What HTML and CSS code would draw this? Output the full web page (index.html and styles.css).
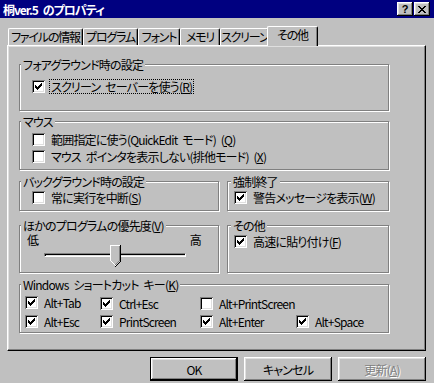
FILE: index.html
```html
<!DOCTYPE html>
<html lang="ja">
<head>
    <meta charset="UTF-8">
    <title>桐ver.5 のプロパティ</title>
    <link rel="stylesheet" href="styles.css">
</head>
<body>
    <div class="window">
        <div class="titlebar">
            <span class="title">桐ver.5 のプロパティ</span>
            <div class="title-buttons">
                <span class="tbtn help">?</span>
                <span class="tbtn">
                    <svg width="8" height="7" viewBox="0 0 8 7" shape-rendering="crispEdges"><path d="M0 0h2v1h-2z M6 0h2v1h-2z M1 1h2v1h-2z M5 1h2v1h-2z M2 2h4v1h-4z M3 3h2v1h-2z M2 4h4v1h-4z M1 5h2v1h-2z M5 5h2v1h-2z M0 6h2v1h-2z M6 6h2v1h-2z"/></svg>
                </span>
            </div>
        </div>

        <div class="content">
            <div class="tabs">
                <div class="tab">ファイルの情報</div>
                <div class="tab">プログラム</div>
                <div class="tab">フォント</div>
                <div class="tab">メモリ</div>
                <div class="tab">スクリーン</div>
                <div class="tab active">その他</div>
            </div>

            <div class="panel">
                <div class="group fore">
                    <div class="group-title">フォアグラウンド時の設定</div>
                    <div class="check first">
                        <span class="cb checked"><svg width="7" height="7" viewBox="0 0 7 7" shape-rendering="crispEdges"><path d="M6 0h1v1h-1z M5 1h2v1h-2z M0 2h1v1h-1z M4 2h3v1h-3z M0 3h2v1h-2z M3 3h3v1h-3z M0 4h5v1h-5z M1 5h3v1h-3z M2 6h1v1h-1z"/></svg></span>
                        <span class="label focused">スクリーン セーバーを使う(<u>R</u>)</span>
                    </div>
                </div>

                <div class="group mouse">
                    <div class="group-title">マウス</div>
                    <div class="check first">
                        <span class="cb"></span>
                        <span class="label">範囲指定に使う(QuickEdit モード) (<u>Q</u>)</span>
                    </div>
                    <div class="check">
                        <span class="cb"></span>
                        <span class="label">マウス ポインタを表示しない(排他モード) (<u>X</u>)</span>
                    </div>
                </div>

                <div class="group-row">
                    <div class="group back">
                        <div class="group-title">バックグラウンド時の設定</div>
                        <div class="check first">
                            <span class="cb"></span>
                            <span class="label">常に実行を中断(<u>S</u>)</span>
                        </div>
                    </div>
                    <div class="group side">
                        <div class="group-title">強制終了</div>
                        <div class="check first">
                            <span class="cb checked"><svg width="7" height="7" viewBox="0 0 7 7" shape-rendering="crispEdges"><path d="M6 0h1v1h-1z M5 1h2v1h-2z M0 2h1v1h-1z M4 2h3v1h-3z M0 3h2v1h-2z M3 3h3v1h-3z M0 4h5v1h-5z M1 5h3v1h-3z M2 6h1v1h-1z"/></svg></span>
                            <span class="label">警告メッセージを表示(<u>W</u>)</span>
                        </div>
                    </div>
                </div>

                <div class="group-row tall">
                    <div class="group prio">
                        <div class="group-title">ほかのプログラムの優先度(<u>V</u>)</div>
                        <div class="slider-labels">
                            <span>低</span>
                            <span>高</span>
                        </div>
                        <div class="slider">
                            <div class="track"></div>
                            <svg class="thumb" style="left: 66px" width="11" height="22" viewBox="0 0 11 22" shape-rendering="crispEdges">
                                <path d="M0 0h11v16l-5 5l-5 -5z" fill="#c0c0c0"/>
                                <path d="M0 0h10v1h-9v15h-1z" fill="#fff"/>
                                <path d="M1 16h1v1h-1z M2 17h1v1h-1z M3 18h1v1h-1z M4 19h1v1h-1z M5 20h1v1h-1z" fill="#fff"/>
                                <path d="M10 0h1v16h-1z" fill="#000"/>
                                <path d="M9 1h1v15h-1z M8 16h1v1h-1z M7 17h1v1h-1z M6 18h1v1h-1z M5 19h1v1h-1z" fill="#808080"/>
                                <path d="M10 16h1v1h-1z M9 17h1v1h-1z M8 18h1v1h-1z M7 19h1v1h-1z M6 20h1v1h-1z M5 21h1v1h-1z" fill="#000"/>
                            </svg>
                        </div>
                    </div>
                    <div class="group side">
                        <div class="group-title">その他</div>
                        <div class="check first">
                            <span class="cb checked"><svg width="7" height="7" viewBox="0 0 7 7" shape-rendering="crispEdges"><path d="M6 0h1v1h-1z M5 1h2v1h-2z M0 2h1v1h-1z M4 2h3v1h-3z M0 3h2v1h-2z M3 3h3v1h-3z M0 4h5v1h-5z M1 5h3v1h-3z M2 6h1v1h-1z"/></svg></span>
                            <span class="label">高速に貼り付け(<u>F</u>)</span>
                        </div>
                    </div>
                </div>

                <div class="group keys">
                    <div class="group-title">Windows ショートカット キー(<u>K</u>)</div>
                    <div class="key-grid">
                        <div class="check"><span class="cb checked"><svg width="7" height="7" viewBox="0 0 7 7" shape-rendering="crispEdges"><path d="M6 0h1v1h-1z M5 1h2v1h-2z M0 2h1v1h-1z M4 2h3v1h-3z M0 3h2v1h-2z M3 3h3v1h-3z M0 4h5v1h-5z M1 5h3v1h-3z M2 6h1v1h-1z"/></svg></span><span class="label">Alt+Tab</span></div>
                        <div class="check"><span class="cb checked"><svg width="7" height="7" viewBox="0 0 7 7" shape-rendering="crispEdges"><path d="M6 0h1v1h-1z M5 1h2v1h-2z M0 2h1v1h-1z M4 2h3v1h-3z M0 3h2v1h-2z M3 3h3v1h-3z M0 4h5v1h-5z M1 5h3v1h-3z M2 6h1v1h-1z"/></svg></span><span class="label">Ctrl+Esc</span></div>
                        <div class="check"><span class="cb"></span><span class="label">Alt+PrintScreen</span></div>
                        <div class="check"></div>
                        <div class="check"><span class="cb checked"><svg width="7" height="7" viewBox="0 0 7 7" shape-rendering="crispEdges"><path d="M6 0h1v1h-1z M5 1h2v1h-2z M0 2h1v1h-1z M4 2h3v1h-3z M0 3h2v1h-2z M3 3h3v1h-3z M0 4h5v1h-5z M1 5h3v1h-3z M2 6h1v1h-1z"/></svg></span><span class="label">Alt+Esc</span></div>
                        <div class="check"><span class="cb checked"><svg width="7" height="7" viewBox="0 0 7 7" shape-rendering="crispEdges"><path d="M6 0h1v1h-1z M5 1h2v1h-2z M0 2h1v1h-1z M4 2h3v1h-3z M0 3h2v1h-2z M3 3h3v1h-3z M0 4h5v1h-5z M1 5h3v1h-3z M2 6h1v1h-1z"/></svg></span><span class="label">PrintScreen</span></div>
                        <div class="check"><span class="cb checked"><svg width="7" height="7" viewBox="0 0 7 7" shape-rendering="crispEdges"><path d="M6 0h1v1h-1z M5 1h2v1h-2z M0 2h1v1h-1z M4 2h3v1h-3z M0 3h2v1h-2z M3 3h3v1h-3z M0 4h5v1h-5z M1 5h3v1h-3z M2 6h1v1h-1z"/></svg></span><span class="label">Alt+Enter</span></div>
                        <div class="check"><span class="cb checked"><svg width="7" height="7" viewBox="0 0 7 7" shape-rendering="crispEdges"><path d="M6 0h1v1h-1z M5 1h2v1h-2z M0 2h1v1h-1z M4 2h3v1h-3z M0 3h2v1h-2z M3 3h3v1h-3z M0 4h5v1h-5z M1 5h3v1h-3z M2 6h1v1h-1z"/></svg></span><span class="label">Alt+Space</span></div>
                    </div>
                </div>
            </div>

            <div class="buttons">
                <div class="btn default">OK</div>
                <div class="btn">キャンセル</div>
                <div class="btn disabled">更新(<u>A</u>)</div>
            </div>
        </div>
    </div>
</body>
</html>
```

FILE: styles.css
```css
* {
    box-sizing: border-box;
}
body {
    margin: 0;
    background: #c0c0c0;
    font-family: "Noto Sans CJK JP", sans-serif;
    font-size: 12px;
    line-height: 13px;
    letter-spacing: -0.8px;
    word-spacing: 3px;
    font-feature-settings: "palt";
    color: #000;
}
.window {
    width: 434px;
    height: 383px;
    overflow: hidden;
}
.titlebar {
    height: 18px;
    background: #000080;
    display: flex;
    align-items: center;
    justify-content: space-between;
    padding: 0 4px 0 3px;
}
.title {
    color: #fff;
    font-weight: bold;
    letter-spacing: -1px;
}
.title-buttons {
    display: flex;
    gap: 1px;
}
.tbtn {
    width: 16px;
    height: 14px;
    display: flex;
    align-items: center;
    justify-content: center;
    background: #c0c0c0;
    box-shadow: inset -1px -1px #000, inset 1px 1px #fff, inset -2px -2px #808080, inset 2px 2px #dfdfdf;
}
.help {
    font-family: "Liberation Sans", sans-serif;
    font-weight: bold;
    font-size: 11px;
    line-height: 11px;
    letter-spacing: 0;
}
.content {
    padding: 8px 8px 0 7px;
}
.tabs {
    display: flex;
    align-items: flex-end;
    height: 19px;
    padding-left: 1px;
}
.tab {
    flex: none;
    height: 17px;
    border-top: 1px solid #fff;
    border-left: 1px solid #fff;
    border-right: 1px solid #000;
    border-radius: 2px 2px 0 0;
    box-shadow: inset -1px 0 #808080;
    line-height: 15px;
    text-align: center;
    letter-spacing: -1.2px;
    white-space: nowrap;
}
.tab:nth-child(1) { width: 75px; }
.tab:nth-child(2) { width: 55px; }
.tab:nth-child(3) { width: 42px; }
.tab:nth-child(4) { width: 40px; }
.tab:nth-child(5) { width: 49px; }
.tab.active {
    width: 51px;
    height: 20px;
    margin: 0 0 -1px -2px;
    position: relative;
    z-index: 1;
    background: #c0c0c0;
    line-height: 16px;
}
.panel {
    height: 306px;
    border-top: 1px solid #fff;
    border-left: 1px solid #fff;
    border-right: 1px solid #000;
    border-bottom: 1px solid #000;
    box-shadow: inset -1px -1px #808080, inset 1px 1px #dfdfdf;
    padding: 18px 0 0 11px;
}
.group {
    width: 370px;
    border: 1px solid #808080;
    box-shadow: 1px 1px #fff, inset 1px 1px #fff;
    padding-left: 12px;
}
.group-title {
    width: max-content;
    margin: -7px 0 0 -11px;
    padding: 0 2px;
    background: #c0c0c0;
    white-space: nowrap;
}
.check {
    display: flex;
    align-items: center;
    gap: 5px;
    height: 16px;
    white-space: nowrap;
}
.check + .check {
    margin-top: 1px;
}
.cb {
    flex: none;
    width: 13px;
    height: 13px;
    padding: 3px;
    background: #fff;
    box-shadow: inset 1px 1px #808080, inset -1px -1px #fff, inset 2px 2px #000, inset -2px -2px #dfdfdf;
}
.cb svg {
    display: block;
}
.label {
    padding: 0 1px;
}
.focused {
    outline: 1px dotted #000;
    outline-offset: 0;
}
.fore {
    height: 47px;
}
.fore .first {
    margin-top: 7px;
}
.mouse {
    height: 49px;
    margin-top: 10px;
}
.mouse .first {
    margin-top: 3px;
}
.group-row {
    display: flex;
    gap: 8px;
    width: 370px;
    margin-top: 11px;
}
.group-row .group {
    height: 30px;
}
.group-row .first {
    margin-top: 1px;
}
.group-row .back,
.group-row .prio {
    width: 200px;
}
.group-row .side {
    width: 162px;
    padding-left: 6px;
}
.group-row .side .group-title {
    margin-left: -3px;
}
.group-row.tall {
    margin-top: 14px;
}
.group-row.tall .group {
    height: 48px;
}
.prio {
    padding-left: 7px;
}
.prio .group-title {
    margin-left: -6px;
}
.slider-labels {
    display: flex;
    justify-content: space-between;
    width: 174px;
    margin-top: 1px;
}
.slider {
    position: relative;
    height: 22px;
    margin-left: 17px;
    padding-top: 7px;
}
.track {
    width: 142px;
    height: 4px;
    border-top: 1px solid #808080;
    border-left: 1px solid #808080;
    border-bottom: 1px solid #fff;
    border-right: 1px solid #fff;
    box-shadow: inset 1px 1px #000, inset -1px -1px #dfdfdf;
}
.thumb {
    position: absolute;
    top: -1px;
}
.keys {
    height: 49px;
    margin-top: 11px;
    padding-left: 5px;
}
.keys .group-title {
    margin-left: -4px;
}
.key-grid {
    display: grid;
    grid-template-columns: 75px 100px 96px auto;
    row-gap: 1px;
    margin-top: 3px;
}
.key-grid .check {
    gap: 5px;
}
.buttons {
    display: flex;
    justify-content: flex-end;
    gap: 6px;
    margin-top: 6px;
}
.btn {
    width: 88px;
    height: 24px;
    display: flex;
    align-items: center;
    justify-content: center;
    box-shadow: inset -1px -1px #000, inset 1px 1px #fff, inset -2px -2px #808080, inset 2px 2px #dfdfdf;
}
.btn.default {
    border: 1px solid #000;
}
.btn.disabled {
    color: #808080;
    text-shadow: 1px 1px #fff;
}
```
